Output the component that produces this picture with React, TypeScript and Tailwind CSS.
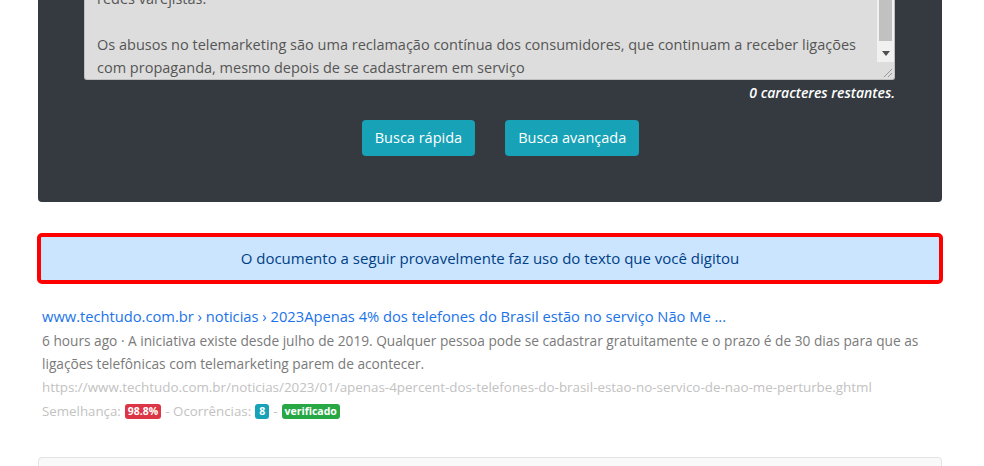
export default function App() {
  const font = { fontFamily: '"Open Sans", "Noto Sans", sans-serif' };

  return (
    <main className="min-h-screen bg-white text-[#212529]" style={font}>
      <div className="ml-[38px] w-[904px]">
        {/* Search panel */}
        <section className="bg-[#343a40] rounded-b-[4px] pl-[46px] pr-[47px] pb-[46px]">
          <div className="relative h-[80px] bg-[#dddddd] border border-[#bfbfbf] border-t-0 rounded-b-[3px] overflow-hidden">
            <div className="pl-[12px] pr-[24px] -mt-[13px] text-[14.5px] leading-[23px] text-[#555]">
              <p>redes varejistas.</p>
              <p>&nbsp;</p>
              <p>
                Os abusos no telemarketing são uma reclamação contínua dos consumidores, que continuam a receber ligações
                <br />
                com propaganda, mesmo depois de se cadastrarem em serviço
              </p>
            </div>
            {/* scrollbar */}
            <div className="absolute right-0 top-0 w-[17px] h-[62px] bg-[#f1f1f1] flex flex-col items-center">
              <div className="w-[13px] h-[41px] bg-[#c1c1c1]" />
              <svg className="mt-[10px]" width="8" height="5" viewBox="0 0 8 5">
                <path d="M0 0 L8 0 L4 5 Z" fill="#505050" />
              </svg>
            </div>
            <svg className="absolute right-[2px] bottom-[2px]" width="9" height="9" viewBox="0 0 9 9">
              <path d="M9 1 L1 9 M9 5 L5 9" stroke="#999" strokeWidth="1" />
            </svg>
          </div>
          <p className="text-right text-white italic font-semibold text-[14px] leading-[24px] mt-[1px]">
            0 caracteres restantes.
          </p>
          <div className="flex justify-center gap-[30px] mt-[15px] pl-[22px]">
            <button className="h-[36px] px-[13px] rounded-[4px] bg-[#17a2b8] text-white text-[14.5px]">
              Busca rápida
            </button>
            <button className="h-[36px] px-[13px] rounded-[4px] bg-[#17a2b8] text-white text-[14.5px]">
              Busca avançada
            </button>
          </div>
        </section>

        {/* Alert */}
        <div className="mt-[31px] -mx-[1px] border-[4px] border-[#ff0000] rounded-[5px] bg-[#cce5ff] h-[51px] flex items-center justify-center text-[#004085] text-[15px]">
          O documento a seguir provavelmente faz uso do texto que você digitou
        </div>

        {/* Result */}
        <div className="pl-[4px] pt-[20px]">
          <a className="block text-[#1a73e8] text-[14.7px] leading-[24px]">
            www.techtudo.com.br › noticias › 2023Apenas 4% dos telefones do Brasil estão no serviço Não Me ...
          </a>
          <p className="mt-[1px] text-[#7a7a7a] text-[13.7px] leading-[23px]">
            6 hours ago · A iniciativa existe desde julho de 2019. Qualquer pessoa pode se cadastrar gratuitamente e o
            prazo é de 30 dias para que as
            <br />
            ligações telefônicas com telemarketing parem de acontecer.
          </p>
          <p className="text-[#c2c2c2] text-[13.4px] leading-[24px]">
            https://www.techtudo.com.br/noticias/2023/01/apenas-4percent-dos-telefones-do-brasil-estao-no-servico-de-nao-me-perturbe.ghtml
          </p>
          <p className="text-[#c2c2c2] text-[13.3px] leading-[24px] flex items-center gap-[4px]">
            <span>Semelhança:</span>
            <span className="bg-[#dc3545] text-white text-[10.5px] font-bold px-[3px] rounded-[3px] leading-[15px]">98.8%</span>
            <span>- Ocorrências:</span>
            <span className="bg-[#17a2b8] text-white text-[10.5px] font-bold px-[4px] rounded-[3px] leading-[15px]">8</span>
            <span>-</span>
            <span className="bg-[#28a745] text-white text-[10.5px] font-bold px-[3px] rounded-[3px] leading-[15px]">verificado</span>
          </p>
        </div>

        {/* Next card */}
        <div className="mt-[34px] h-[40px] border border-[#e3e3e3] rounded-t-[4px] bg-[#f9f9f9]" />
      </div>
    </main>
  );
}
